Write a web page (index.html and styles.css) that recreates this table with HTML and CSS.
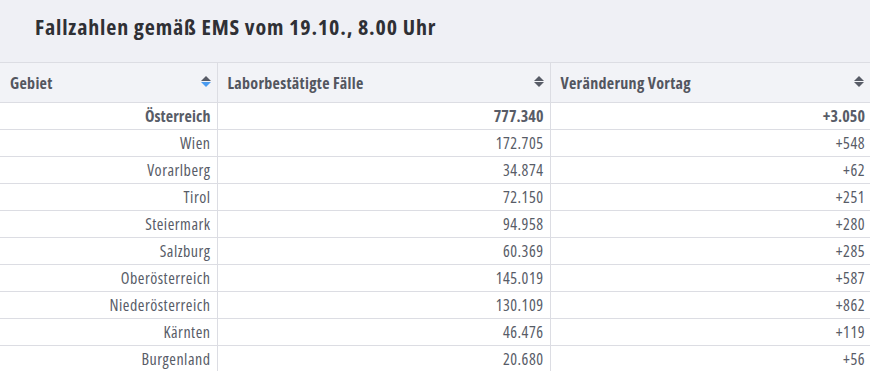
FILE: index.html
```html
<!DOCTYPE html>
<html lang="de">
<head>
<meta charset="utf-8">
<link rel="stylesheet" href="styles.css">
</head>
<body>
<div class="wrap">
  <h1 class="title">Fallzahlen gemäß EMS vom 19.10., 8.00 Uhr</h1>
  <table class="tbl">
    <colgroup><col class="c1"><col class="c2"><col class="c3"></colgroup>
    <thead>
      <tr>
        <th><div class="th-in"><span class="hd">Gebiet</span><span class="sort active"><i class="up"></i><i class="down"></i></span></div></th>
        <th><div class="th-in"><span class="hd">Laborbestätigte Fälle</span><span class="sort"><i class="up"></i><i class="down"></i></span></div></th>
        <th><div class="th-in"><span class="hd">Veränderung Vortag</span><span class="sort"><i class="up"></i><i class="down"></i></span></div></th>
      </tr>
    </thead>
    <tbody>
      <tr class="total"><td>Österreich</td><td>777.340</td><td>+3.050</td></tr>
      <tr><td>Wien</td><td>172.705</td><td>+548</td></tr>
      <tr><td>Vorarlberg</td><td>34.874</td><td>+62</td></tr>
      <tr><td>Tirol</td><td>72.150</td><td>+251</td></tr>
      <tr><td>Steiermark</td><td>94.958</td><td>+280</td></tr>
      <tr><td>Salzburg</td><td>60.369</td><td>+285</td></tr>
      <tr><td>Oberösterreich</td><td>145.019</td><td>+587</td></tr>
      <tr><td>Niederösterreich</td><td>130.109</td><td>+862</td></tr>
      <tr><td>Kärnten</td><td>46.476</td><td>+119</td></tr>
      <tr><td>Burgenland</td><td>20.680</td><td>+56</td></tr>
    </tbody>
  </table>
</div>
</body>
</html>
```
FILE: styles.css
```css
html, body {
  margin: 0;
  padding: 0;
  background: #ffffff;
}
body {
  font-family: "Open Sans", sans-serif;
  font-stretch: 75%;
  color: #585c67;
}
.wrap {
  width: 870px;
  background: #eff0f5;
}
.title {
  margin: 0;
  height: 62px;
  box-sizing: border-box;
  padding: 12px 0 0 35px;
  font-size: 22px;
  line-height: 28px;
  letter-spacing: 0.85px;
  font-weight: bold;
  color: #2f3035;
}
.tbl {
  width: 870px;
  border-collapse: collapse;
  table-layout: fixed;
  background: #ffffff;
}
.c1 { width: 217px; }
.c2 { width: 333px; }
.c3 { width: 320px; }
.tbl th {
  background: #f2f3f7;
  border-top: 1px solid #dcdde3;
  border-bottom: 1px solid #dcdde3;
  border-left: 1px solid #dcdde3;
  height: 39px;
  padding: 0 6px 0 10px;
  text-align: left;
  font-size: 16px;
  letter-spacing: 0.3px;
  font-weight: bold;
  color: #53565f;
}
.tbl th:first-child { border-left: none; }
.th-in {
  display: flex;
  align-items: center;
  justify-content: space-between;
}
.sort {
  display: flex;
  flex-direction: column;
  align-items: center;
  gap: 1px;
  margin-top: -3px;
}
.sort i {
  display: block;
  width: 0;
  height: 0;
  border-left: 5px solid transparent;
  border-right: 5px solid transparent;
}
.sort .up { border-bottom: 5px solid #585c67; }
.sort .down { border-top: 5px solid #585c67; }
.sort.active .down { border-top-color: #4a9bf0; }
.tbl td {
  height: 26px;
  padding: 0 6px;
  text-align: right;
  font-size: 16px;
  letter-spacing: 0.5px;
  border-bottom: 1px solid #dcdde3;
  border-left: 1px solid #dcdde3;
}
.tbl td:first-child { border-left: none; }
.tbl td:last-child { padding-right: 5px; }
.tbl tr.total td { font-weight: bold; letter-spacing: 0.1px; }
```
